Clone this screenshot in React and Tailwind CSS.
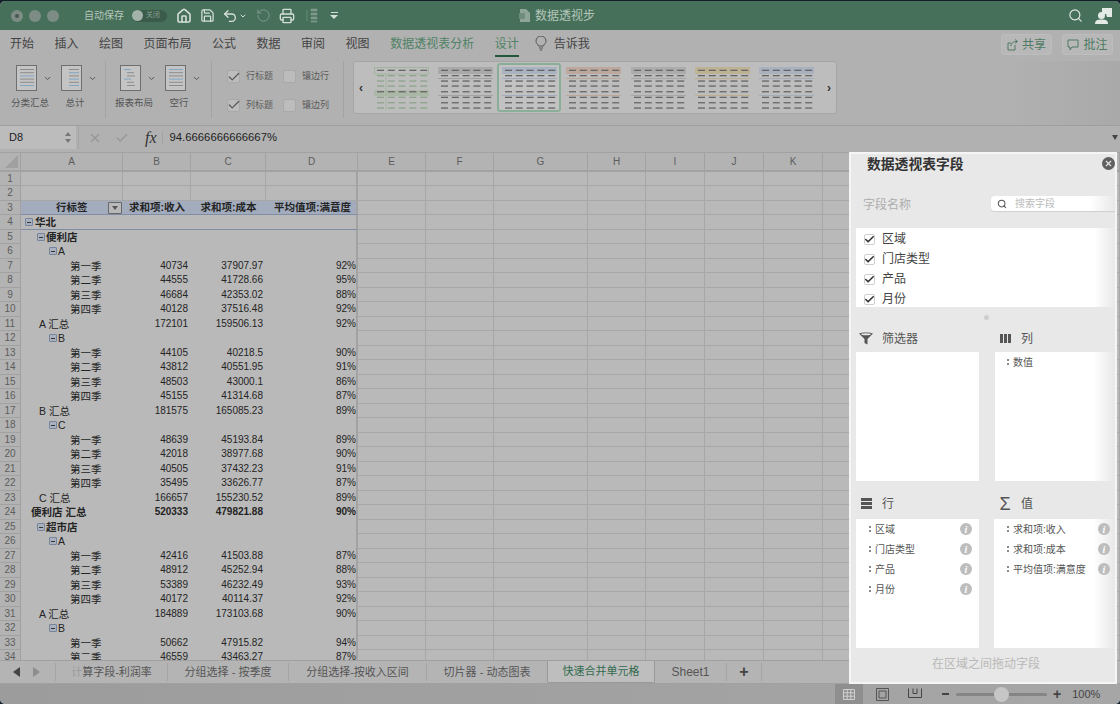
import { Check, ChevronDown, House, Printer, RotateCw, Save, Search, Undo2, X } from 'lucide-react';

const tabs = ['开始', '插入', '绘图', '页面布局', '公式', '数据', '审阅', '视图'];

const rows = [
    { n: 1 },
    { n: 2 },
    { n: 3, head: true },
    { n: 4, label: '华北', box: 25, x: 35, bold: true, blue: true },
    { n: 5, label: '便利店', box: 37, x: 46, bold: true },
    { n: 6, label: 'A', box: 49, x: 58 },
    { n: 7, label: '第一季', x: 70, b: '40734', c: '37907.97', d: '92%' },
    { n: 8, label: '第二季', x: 70, b: '44555', c: '41728.66', d: '95%' },
    { n: 9, label: '第三季', x: 70, b: '46684', c: '42353.02', d: '88%' },
    { n: 10, label: '第四季', x: 70, b: '40128', c: '37516.48', d: '92%' },
    { n: 11, label: 'A 汇总', x: 39, b: '172101', c: '159506.13', d: '92%' },
    { n: 12, label: 'B', box: 49, x: 58 },
    { n: 13, label: '第一季', x: 70, b: '44105', c: '40218.5', d: '90%' },
    { n: 14, label: '第二季', x: 70, b: '43812', c: '40551.95', d: '91%' },
    { n: 15, label: '第三季', x: 70, b: '48503', c: '43000.1', d: '86%' },
    { n: 16, label: '第四季', x: 70, b: '45155', c: '41314.68', d: '87%' },
    { n: 17, label: 'B 汇总', x: 39, b: '181575', c: '165085.23', d: '89%' },
    { n: 18, label: 'C', box: 49, x: 58 },
    { n: 19, label: '第一季', x: 70, b: '48639', c: '45193.84', d: '89%' },
    { n: 20, label: '第二季', x: 70, b: '42018', c: '38977.68', d: '90%' },
    { n: 21, label: '第三季', x: 70, b: '40505', c: '37432.23', d: '91%' },
    { n: 22, label: '第四季', x: 70, b: '35495', c: '33626.77', d: '87%' },
    { n: 23, label: 'C 汇总', x: 39, b: '166657', c: '155230.52', d: '89%' },
    { n: 24, label: '便利店 汇总', x: 31, b: '520333', c: '479821.88', d: '90%', bold: true },
    { n: 25, label: '超市店', box: 37, x: 46, bold: true },
    { n: 26, label: 'A', box: 49, x: 58 },
    { n: 27, label: '第一季', x: 70, b: '42416', c: '41503.88', d: '87%' },
    { n: 28, label: '第二季', x: 70, b: '48912', c: '45252.94', d: '88%' },
    { n: 29, label: '第三季', x: 70, b: '53389', c: '46232.49', d: '93%' },
    { n: 30, label: '第四季', x: 70, b: '40172', c: '40114.37', d: '92%' },
    { n: 31, label: 'A 汇总', x: 39, b: '184889', c: '173103.68', d: '90%' },
    { n: 32, label: 'B', box: 49, x: 58 },
    { n: 33, label: '第一季', x: 70, b: '50662', c: '47915.82', d: '94%' },
    { n: 34, label: '第二季', x: 70, b: '46559', c: '43463.27', d: '87%' },
];

const colHeads = ['A', 'B', 'C', 'D', 'E', 'F', 'G', 'H', 'I', 'J', 'K', 'L'];
const gridCols = 'grid grid-cols-[21px_102px_68px_75px_92px_68px_68px_94px_58px_59px_59px_59px_1fr]';

function LayoutIcon({ variant }) {
    const blue = '#7fa6c2';
    const gray = '#8c8c8c';
    const lines = {
        subtotal: [[4, 14, gray], [4, 14, gray], [4, 14, blue], [4, 14, gray], [4, 14, gray], [4, 14, blue]],
        total: [[8, 10, gray], [8, 10, blue], [8, 10, gray], [8, 10, blue], [8, 10, gray], [8, 10, blue]],
        report: [[4, 7, blue], [7, 7, gray], [7, 8, gray], [4, 7, blue], [7, 7, gray], [7, 8, gray]],
        blank: [[4, 14, blue], [4, 14, gray], [4, 14, gray], [4, 14, blue], [4, 14, gray], [4, 14, gray]],
    }[variant];
    return (
        <svg width="21" height="26" viewBox="0 0 21 26">
            <rect x="0.5" y="0.5" width="20" height="25" fill="#c4c4c4" stroke="#6f6f6f" />
            {lines.map(([x, w, color], i) => (
                <rect key={i} x={x} y={4 + i * 3.2} width={w} height="1" fill={color} />
            ))}
        </svg>
    );
}

function StyleThumb({ color, head, selected, first }) {
    const ys = [6.3, 11.6, 17, 22, 27.7, 33.3, 38.7, 44];
    const thumb = (
        <svg width="55" height="47" viewBox="0 0 55 47">
            {first ? (
                <rect x="0.5" y="3.5" width="54" height="6.500" fill="none" stroke={color} />
            ) : (
                <rect x="0" y="3" width="55" height="7" fill={head} />
            )}
            {!first && <rect x="0" y="14" width="55" height="1" fill={color} />}
            {first ? <rect x="0" y="26" width="55" height="6" fill={head} /> : <rect x="0" y="31" width="55" height="1" fill={color} />}
            {first && <rect x="11.500" y="10" width="1" height="36" fill={color} />}
            {ys.map((y, i) =>
                [3, 13.8, 24.6, 35.4, 46.2].map((x) => (
                    <rect key={`${i}-${x}`} x={x} y={y - 0.6} width="7" height="1.300" fill={first && i !== 0 && i !== 4 ? '#8ea48b' : '#666'} />
                ))
            )}
        </svg>
    );
    if (selected) {
        return <div className="-my-px flex h-[49px] w-[64px] items-center justify-center rounded-[3px] border-2 border-[#8aae98] bg-[#c2c2c2]">{thumb}</div>;
    }
    return <div className="flex h-[49px] w-[55px] shrink-0 items-center justify-center">{thumb}</div>;
}

function RibbonCheck({ checked, label }) {
    return (
        <div className="flex w-[56px] shrink-0 items-center">
            <span className="relative flex h-[13px] w-[13px] shrink-0 items-center justify-center rounded-[2px] border border-[#a9a9a9] bg-[#bcbcbc]">
                {checked && <Check size={14} strokeWidth={2.2} className="absolute text-[#5a5a5a]" />}
            </span>
            <span className="ml-[6px] text-[9px] whitespace-nowrap text-[#5c5c5c]">{label}</span>
        </div>
    );
}

function Minus({ left }) {
    return (
        <span className="absolute top-[3px] flex h-[8px] w-[8px] items-center justify-center rounded-[1px] border border-[#76849c] bg-[#a9b1bf]" style={{ left }}>
            <span className="h-px w-[4px] bg-[#333]" />
        </span>
    );
}

function Row({ row }) {
    const line = 'border-b border-b-[#a7a7a7]';
    const pivot = row.n > 3;
    const blank = 'border-r border-r-[#a7a7a7]';
    const weight = row.bold ? 'font-bold' : '';
    const rule = row.head || row.blue ? 'border-b border-b-[#7f8da6]' : pivot ? '' : line;
    const tint = row.head ? 'bg-[#a3acbd]' : 'bg-[#b9b9b9]';
    const numCell = row.head ? 'text-center text-[10.5px] leading-[13px] font-bold whitespace-nowrap' : 'pr-[3px] text-right';

    return (
        <div className={`${gridCols} ${row.n % 2 === 0 ? 'h-[15px]' : 'h-[14px]'} text-[10px] leading-[14px] text-[#242424]`}>
            <div className="border-r border-b border-[#a2a2a2] bg-[#b3b3b3] text-center leading-[13px] text-[#5d5d5d]">{row.n}</div>
            <div className={`relative ${tint} ${rule} ${pivot || row.head ? '' : blank} ${weight}`}>
                {row.head ? (
                    <>
                        <span className="absolute left-[35px] text-[10.5px] leading-[13px] font-bold">行标签</span>
                        <span className="absolute top-[1px] right-[1px] flex h-[12px] w-[14px] items-center justify-center rounded-[1px] border border-[#666] bg-[#b9b9b9]">
                            <span className="h-0 w-0 border-x-[3px] border-t-[4px] border-x-transparent border-t-[#555]" />
                        </span>
                    </>
                ) : (
                    <>
                        {row.box && <Minus left={row.box - 21} />}
                        {row.label && <span className="absolute whitespace-nowrap text-[10.5px]" style={{ left: row.x - 21 }}>{row.label}</span>}
                    </>
                )}
            </div>
            <div className={`${tint} ${rule} ${pivot || row.head ? '' : blank} ${numCell} ${weight}`}>{row.head ? '求和项:收入' : row.b}</div>
            <div className={`${tint} ${rule} ${pivot || row.head ? '' : blank} ${numCell} ${weight}`}>{row.head ? '求和项:成本' : row.c}</div>
            <div className={`${tint} ${rule} border-r-2 border-r-[#a2a2a2] text-right whitespace-nowrap ${row.head ? 'pr-[5px] text-[10.5px] leading-[13px] font-bold' : ''} ${weight}`}>
                {row.head ? '平均值项:满意度' : row.d}
            </div>
            {colHeads.slice(4).map((c) => (
                <div key={c} className={`${line} ${blank} bg-[#b9b9b9]`} />
            ))}
        </div>
    );
}

function Grip() {
    return (
        <span className="mr-[4px] flex flex-col gap-[2px]">
            <span className="h-[2px] w-[2px] bg-[#8a8a8a]" />
            <span className="h-[2px] w-[2px] bg-[#8a8a8a]" />
        </span>
    );
}

function Pill({ label, right }) {
    return (
        <div className={`flex h-[20px] items-center pl-[13px] text-[10px] text-[#555] ${right ? 'pr-[5px]' : 'pr-[7px]'}`}>
            <Grip />
            <span className="flex-1 whitespace-nowrap">{label}</span>
            <span className="flex h-[12px] w-[12px] items-center justify-center rounded-full bg-[#bdbdbd] font-['Liberation_Serif'] text-[10px] font-bold text-white italic">i</span>
        </div>
    );
}

function FieldRow({ label }) {
    return (
        <div className="flex h-[20px] items-center pl-[8px] text-[12px] text-[#444]">
            <span className="relative mr-[7px] flex h-[11px] w-[11px] items-center justify-center rounded-[2px] border border-[#cfcfcf] bg-white">
                <Check size={11} strokeWidth={3.5} className="absolute text-[#333]" />
            </span>
            {label}
        </div>
    );
}

function AreaHead({ icon, label, lower }) {
    return (
        <div className={`flex items-center text-[12px] text-[#555] ${lower ? 'h-[38px] pt-[7px]' : 'h-[25px] pb-[2px]'}`}>
            <span className="mr-[6px] flex w-[20px] items-center justify-center">{icon}</span>
            {label}
        </div>
    );
}

function FieldPanel() {
    return (
        <div className="absolute top-[152px] left-[849px] flex h-[532px] w-[268px] flex-col border-2 border-[#f5f5f5] bg-[#e8e8e8]">
            <div className="relative h-[26px]">
                <span className="absolute top-[1px] left-[16px] text-[13.8px] font-semibold whitespace-nowrap text-[#333]">数据透视表字段</span>
                <span className="absolute top-[3px] right-0 flex h-[13px] w-[13px] items-center justify-center rounded-full bg-[#5f5f5f]">
                    <X size={9} strokeWidth={3} className="text-[#e8e8e8]" />
                </span>
            </div>
            <div className="flex h-[48px] items-start pt-[16px] pl-[12px]">
                <span className="w-[128px] text-[12px] text-[#adadad]">字段名称</span>
                <div className="flex h-[15px] w-[124px] items-center rounded-l-[4px] bg-gradient-to-r from-white from-80% to-[#e8e8e8] pl-[6px] text-[10px] text-[#bcbcbc] shadow-[0_1px_1px_#cfcfcf]">
                    <Search size={10} strokeWidth={2.5} className="mr-[8px] text-[#555]" />
                    搜索字段
                </div>
            </div>
            <div className="ml-[5px] h-[79px] bg-gradient-to-r from-white from-92% to-[#e8e8e8] pt-px">
                <FieldRow label="区域" />
                <FieldRow label="门店类型" />
                <FieldRow label="产品" />
                <FieldRow label="月份" />
            </div>
            <div className="flex h-[20px] items-center justify-center pl-[6px]">
                <span className="h-[5px] w-[5px] rounded-full bg-[#cdcdcd]" />
            </div>
            <div className="grid grid-cols-[123px_1fr] gap-x-[16px] pl-[5px]">
                <div>
                    <AreaHead
                        label="筛选器"
                        icon={
                            <svg width="14" height="13" viewBox="0 0 14 13">
                                <path d="M0 1.5C2 0 12 0 14 1.5L8.5 7V12.5L5.5 11V7Z" fill="#555" />
                                <ellipse cx="7" cy="2.2" rx="4.8" ry="1" fill="#e8e8e8" />
                            </svg>
                        }
                    />
                    <div className="h-[129px] bg-white" />
                </div>
                <div>
                    <AreaHead
                        label="列"
                        icon={
                            <span className="flex gap-[1px]">
                                <span className="h-[9px] w-[3px] bg-[#555]" />
                                <span className="h-[9px] w-[3px] bg-[#555]" />
                                <span className="h-[9px] w-[3px] bg-[#555]" />
                            </span>
                        }
                    />
                    <div className="h-[129px] bg-gradient-to-r from-white from-82% to-[#e8e8e8]">
                        <div className="flex h-[20px] items-center pl-[12px] text-[10px] text-[#555]">
                            <Grip />
                            数值
                        </div>
                    </div>
                </div>
                <div>
                    <AreaHead
                        lower
                        label="行"
                        icon={
                            <span className="flex flex-col gap-[1px]">
                                <span className="h-[3px] w-[11px] bg-[#555]" />
                                <span className="h-[3px] w-[11px] bg-[#555]" />
                                <span className="h-[3px] w-[11px] bg-[#555]" />
                            </span>
                        }
                    />
                    <div className="h-[129px] bg-white">
                        <Pill label="区域" />
                        <Pill label="门店类型" />
                        <Pill label="产品" />
                        <Pill label="月份" />
                    </div>
                </div>
                <div>
                    <AreaHead lower label="值" icon={<span className="text-[18px] leading-none text-[#555]">Σ</span>} />
                    <div className="-ml-px h-[129px] bg-gradient-to-r from-white from-82% to-[#e8e8e8]">
                        <Pill right label="求和项:收入" />
                        <Pill right label="求和项:成本" />
                        <Pill right label="平均值项:满意度" />
                    </div>
                </div>
            </div>
            <div className="flex flex-1 items-center justify-center pb-[3px] pl-[6px] text-[12px] text-[#b9b9b9]">在区域之间拖动字段</div>
        </div>
    );
}

export default function App() {
    return (
        <div className="relative h-[704px] w-[1120px] overflow-hidden bg-[#141e2b] pt-px font-['Liberation_Sans','Noto_Sans_CJK_SC',sans-serif]">
            <div className="flex h-[703px] flex-col overflow-hidden rounded-[5px] bg-[#b1b1b1]">
                {/* title bar */}
                <div className="relative flex h-[29px] shrink-0 items-center bg-[#47705a] text-[#d5dfd9]">
                    <div className="ml-[11px] flex gap-[6px]">
                        <span className="flex h-[12px] w-[12px] items-center justify-center rounded-full bg-[#7d8d85]">
                            <span className="h-[4px] w-[4px] rounded-full bg-[#47564e]" />
                        </span>
                        <span className="h-[12px] w-[12px] rounded-full bg-[#7d8d85]" />
                        <span className="h-[12px] w-[12px] rounded-full bg-[#7d8d85]" />
                    </div>
                    <span className="ml-[25px] text-[10px] text-[#b4c6bb]">自动保存</span>
                    <div className="ml-[8px] flex h-[12px] w-[35px] items-center rounded-full bg-[#3c5c4b]">
                        <span className="h-[11px] w-[11px] rounded-full bg-[#a3b3a9]" />
                        <span className="ml-[3px] text-[7px] text-[#86a192]">关闭</span>
                    </div>
                    <House size={16} strokeWidth={2.4} className="ml-[9px]" />
                    <Save size={15} strokeWidth={2} className="ml-[8px]" />
                    <Undo2 size={16} strokeWidth={2} className="ml-[7px]" />
                    <ChevronDown size={8} strokeWidth={3} className="ml-px" />
                    <RotateCw size={15} strokeWidth={1.6} className="ml-[9px] -scale-x-100 text-[#7f9a8b]" />
                    <Printer size={16} strokeWidth={2} className="ml-[8px]" />
                    <svg width="12" height="15" viewBox="0 0 12 15" className="ml-[11px] text-[#7f9a8b]">
                        <path d="M1 2v11M5 1h6v2H5zM5 5h6v2H5zM5 9h6v2H5zM5 13h6v1H5z" stroke="currentColor" fill="currentColor" strokeWidth="0.6" />
                    </svg>
                    <span className="ml-[12px] flex flex-col items-center gap-[2px]">
                        <span className="h-px w-[7px] bg-[#d5dfd9]" />
                        <span className="h-0 w-0 border-x-[4px] border-t-[4px] border-x-transparent border-t-[#d5dfd9]" />
                    </span>
                    <div className="ml-[181px] flex items-center text-[12px] text-[#b4c6bb]">
                        <svg width="11" height="13" viewBox="0 0 11 13" className="mr-[5px]">
                            <path d="M1 0h6l4 4v9H1z" fill="#8ea598" />
                            <rect x="0" y="4" width="6" height="6" fill="#6f8c7c" />
                        </svg>
                        数据透视步
                    </div>
                    <Search size={15} strokeWidth={1.8} className="absolute right-[37px] text-[#e4eae6]" />
                    <svg width="17" height="18" viewBox="0 0 17 18" className="absolute right-[8px] text-[#e4eae6]">
                        <path d="M7 1h10v9h-5l-1-3H7z" fill="currentColor" />
                        <circle cx="6.5" cy="8.5" r="3.5" fill="currentColor" />
                        <path d="M0 17c0-4 3-4.5 6.5-4.5S13 13 13 17z" fill="currentColor" />
                    </svg>
                </div>

                {/* tabs */}
                <div className="relative flex h-[31px] shrink-0 items-center pb-[4px] pl-[10px] text-[12px] text-[#444]">
                    <div className="flex gap-[20.500px]">
                        {tabs.map((t) => (
                            <span key={t}>{t}</span>
                        ))}
                        <span className="text-[#4f8266]">数据透视表分析</span>
                        <span className="relative text-[#4f8266]">
                            设计
                            <span className="absolute right-0 -bottom-[4px] left-0 h-[2px] bg-[#22573c]" />
                        </span>
                    </div>
                    <svg width="12" height="15" viewBox="0 0 12 15" fill="none" stroke="#555" className="ml-[16px]">
                        <path d="M3.500 10C3 8 1 7.500 1 5a5 5 0 0 1 10 0c0 2.500-2 3-2.500 5zM4 12h4M4.800 14h2.400" />
                    </svg>
                    <span className="ml-[7px]">告诉我</span>
                    <div className="absolute top-[4px] right-[7px] flex gap-[10px] text-[#4f7a63]">
                        <div className="flex h-[21px] w-[51px] items-center justify-center gap-[4px] rounded-[3px] border border-[#bdbdbd] bg-[#b8b8b8]">
                            <svg width="11" height="12" viewBox="0 0 11 12" fill="none" stroke="currentColor">
                                <path d="M8 6v5H1V4h3M4 7c0-3 2-4.500 6-4.500M8 .5l2.500 2L8 4.500" />
                            </svg>
                            共享
                        </div>
                        <div className="flex h-[21px] w-[51px] items-center justify-center gap-[4px] rounded-[3px] border border-[#bdbdbd] bg-[#b8b8b8]">
                            <svg width="12" height="12" viewBox="0 0 12 12" fill="none" stroke="currentColor">
                                <path d="M1 1h10v7H5l-2 3V8H1z" />
                            </svg>
                            批注
                        </div>
                    </div>
                </div>

                {/* ribbon */}
                <div className="flex h-[64px] shrink-0 items-start bg-gradient-to-r from-[#b1b1b1] from-90% to-[#a9a9a9] pl-[10px]">
                    {[
                        [
                            ['subtotal', '分类汇总'],
                            ['total', '总计'],
                        ],
                        [
                            ['report', '报表布局'],
                            ['blank', '空行'],
                        ],
                    ].map((group, g) => (
                        <div key={g} className={`flex h-[57px] gap-[7px] border-r border-[#a3a3a3] pt-[4px] ${g === 0 ? 'w-[96px] pl-[1px]' : 'w-[106px] pl-[9px]'}`}>
                            {group.map(([v, label]) => (
                                <div key={v} className="flex w-[38px] flex-col items-start">
                                    <div className="flex items-center gap-[6px] pl-[5px]">
                                        <LayoutIcon variant={v} />
                                        <ChevronDown size={9} strokeWidth={2.6} className="text-[#555]" />
                                    </div>
                                    <span className="mt-[5px] w-full whitespace-nowrap text-center text-[9.5px] text-[#555]">{label}</span>
                                </div>
                            ))}
                        </div>
                    ))}
                    <div className="flex h-[57px] w-[132px] flex-col gap-[15px] border-r border-[#a3a3a3] pt-[9px] pl-[15px]">
                        <div className="flex">
                            <RibbonCheck checked label="行标题" />
                            <RibbonCheck label="镶边行" />
                        </div>
                        <div className="flex">
                            <RibbonCheck checked label="列标题" />
                            <RibbonCheck label="镶边列" />
                        </div>
                    </div>
                    <div className="ml-[9px] flex h-[53px] w-[484px] items-center rounded-[3px] border border-[#a5a5a5] bg-[#bdbdbd]">
                        <span className="w-[20px] pl-[5px] text-[12px] font-bold text-[#333]">‹</span>
                        <StyleThumb first color="#a3b59e" head="#abb7a7" />
                        <span className="w-[9px] shrink-0" />
                        <StyleThumb color="#a3a3a3" head="#a9a9a9" />
                        <span className="w-[4px] shrink-0" />
                        <StyleThumb selected color="#a3acbc" head="#a9b2c0" />
                        <span className="w-[5px] shrink-0" />
                        <StyleThumb color="#bba699" head="#bda89e" />
                        <span className="w-[10px] shrink-0" />
                        <StyleThumb color="#a6a6a6" head="#acacac" />
                        <span className="w-[9px] shrink-0" />
                        <StyleThumb color="#bcaf8c" head="#bdb293" />
                        <span className="w-[9px] shrink-0" />
                        <StyleThumb color="#a3aebb" head="#a8b1bd" />
                        <span className="ml-[13px] text-[12px] font-bold text-[#333]">›</span>
                    </div>
                </div>

                {/* formula bar */}
                <div className="flex h-[27px] shrink-0 items-start border-t border-[#9f9f9f] text-[#222]">
                    <div className="relative flex h-[23px] w-[76px] items-center bg-[#bcbcbc] pl-[9px] text-[11px]">
                        D8
                        <span className="absolute right-[5px] flex flex-col gap-[3px]">
                            <span className="h-0 w-0 border-x-[3px] border-b-[4px] border-x-transparent border-b-[#777]" />
                            <span className="h-0 w-0 border-x-[3px] border-t-[4px] border-x-transparent border-t-[#777]" />
                        </span>
                    </div>
                    <span className="ml-[2px] h-[23px] w-px bg-[#a4a4a4]" />
                    <div className="flex h-[23px] flex-1 items-center">
                        <X size={14} strokeWidth={2.4} className="ml-[9px] text-[#979797]" />
                        <Check size={14} strokeWidth={2.4} className="ml-[13px] text-[#979797]" />
                        <span className="ml-[16px] font-['Liberation_Serif'] text-[16px] text-[#333] italic">fx</span>
                        <span className="ml-[5px] h-[14px] w-px bg-[#a4a4a4]" />
                        <span className="ml-[7px] text-[11.3px]">94.6666666666667%</span>
                        <span className="absolute right-[2px] h-0 w-0 border-x-[3.500px] border-t-[5px] border-x-transparent border-t-[#444]" />
                    </div>
                </div>

                {/* sheet */}
                <div className="h-[508px] shrink-0 overflow-hidden bg-[#b9b9b9]">
                    <div className={`${gridCols} h-[20px] border-t border-b-2 border-[#a2a2a2] bg-[#b3b3b3] text-[10px] leading-[17px] text-[#5d5d5d]`}>
                        <div className="relative border-r border-[#a2a2a2]">
                            <span className="absolute right-[2px] bottom-[2px] h-0 w-0 border-b-[13px] border-l-[13px] border-b-[#a0a0a0] border-l-transparent" />
                        </div>
                        {colHeads.map((c) => (
                            <div key={c} className="border-r border-[#a2a2a2] text-center">
                                {c}
                            </div>
                        ))}
                        <div />
                    </div>
                    {rows.map((row) => (
                        <Row key={row.n} row={row} />
                    ))}
                </div>

                {/* sheet tabs */}
                <div className="flex h-[24px] shrink-0 items-center border-t border-b border-[#a0a0a0] bg-[#b4b4b4] text-[11px] text-[#555]">
                    <span className="ml-[13px] h-0 w-0 border-y-[5px] border-r-[7px] border-y-transparent border-r-[#444]" />
                    <span className="ml-[13px] h-0 w-0 border-y-[5px] border-l-[7px] border-y-transparent border-l-[#8d8d8d]" />
                    <div className="ml-[15px] flex h-[18px] w-[113px] items-center justify-center border-x border-[#a4a4a4]">
                        <span className="text-[#9b9b9b]">计</span>算字段-利润率
                    </div>
                    <div className="flex h-[18px] w-[121px] items-center justify-center border-r border-[#a4a4a4]">分组选择 - 按季度</div>
                    <div className="flex h-[18px] w-[138px] items-center justify-center border-r border-[#a4a4a4]">分组选择-按收入区间</div>
                    <div className="flex h-[18px] w-[120px] items-center justify-center">切片器 - 动态图表</div>
                    <div className="flex h-[22px] w-[108px] items-center justify-center rounded-b-[2px] border-x border-b border-[#999] bg-[#bebebe] text-[#336b4e]">快速合并单元格</div>
                    <div className="flex h-[18px] w-[72px] items-center justify-center border-r border-[#a4a4a4] text-[12px]">Sheet1</div>
                    <div className="flex h-[18px] w-[35px] items-center justify-center border-r border-[#a4a4a4] text-[16px] font-bold text-[#444]">+</div>
                </div>

                {/* status bar */}
                <div className="flex min-h-0 flex-1 items-center bg-gradient-to-r from-[#9c9c9c] to-[#a6a6a6] pl-[835px] text-[#555]">
                    <div className="flex h-[20px] w-[28px] items-center justify-center bg-[#8f8f8f]">
                        <svg width="12" height="11" viewBox="0 0 12 11" fill="none" stroke="#d0d0d0">
                            <path d="M.5.500h11v10H.5zM4.200.500v10M7.800.500v10M.5 3.800h11M.5 7.200h11" />
                        </svg>
                    </div>
                    <svg width="13" height="13" viewBox="0 0 13 13" fill="none" stroke="#555" className="ml-[13px]">
                        <path d="M.5.500h12v12H.5zM3 3h7v7H3z" />
                    </svg>
                    <svg width="14" height="12" viewBox="0 0 14 12" fill="none" stroke="#444" className="ml-[19px]">
                        <path d="M.5.500v9h13v-9M5 .500v5h4v-5" />
                    </svg>
                    <span className="ml-[20px] h-[2px] w-[7px] shrink-0 bg-[#444]" />
                    <div className="relative ml-[7px] h-[3px] w-[91px] shrink-0 rounded-full bg-[#858585]">
                        <span className="absolute top-[-6px] left-[38px] h-[15px] w-[15px] rounded-full bg-[#c6c6c6]" />
                    </div>
                    <span className="ml-[6px] text-[14px] font-bold text-[#444]">+</span>
                    <span className="ml-[11px] text-[11px] text-[#444]">100%</span>
                </div>
            </div>
            <FieldPanel />
        </div>
    );
}
